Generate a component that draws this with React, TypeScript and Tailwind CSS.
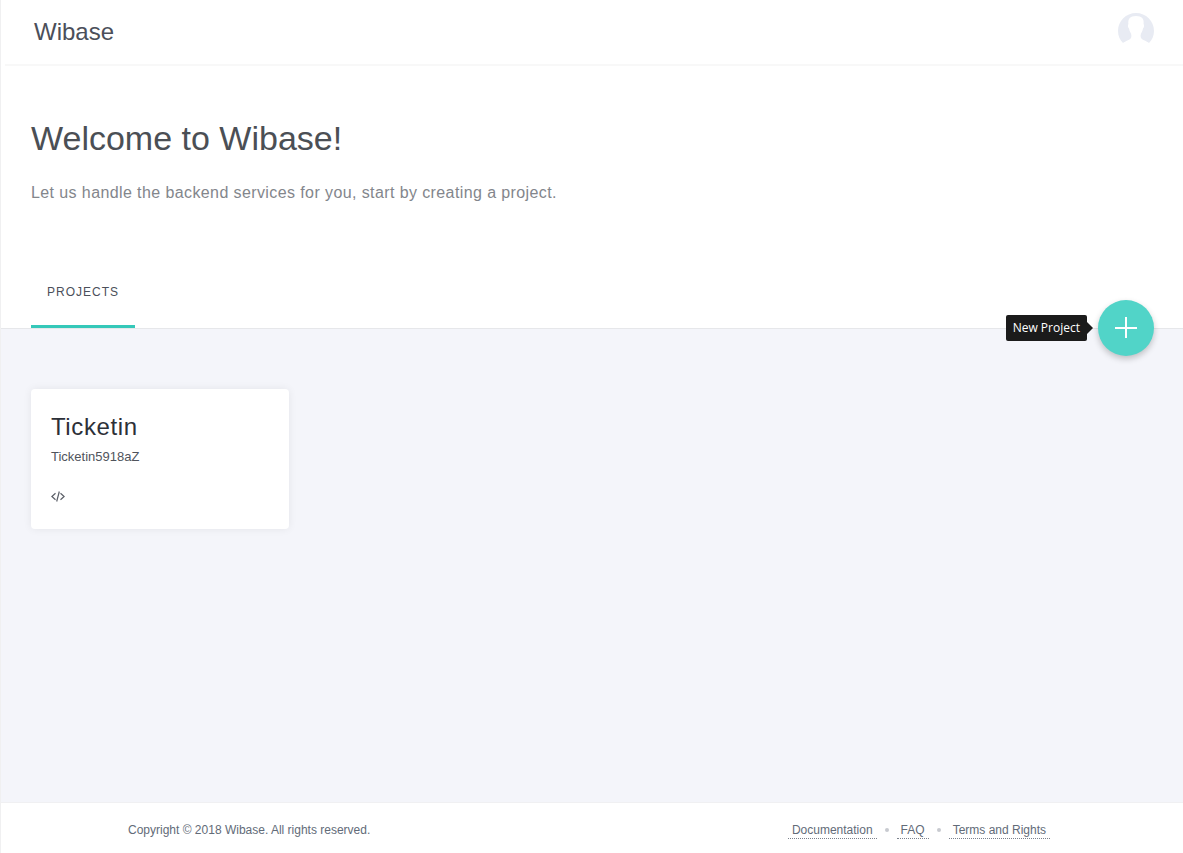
import React from "react";

const footerLinks = ["Documentation", "FAQ", "Terms and Rights"];

function Header() {
  return (
    <header className="pl-1">
      <div className="flex h-[66px] items-start justify-between border-b-2 border-[#f8f8f8] pl-[29px] pr-[29px] pt-3">
        <a href="#home" className="pt-1 text-2xl leading-8 text-[#4b4f5a]">
          Wibase
        </a>
        <button type="button" aria-label="Account" className="size-9">
          <svg viewBox="0 0 36 36" className="size-9" aria-hidden="true">
            <path
              fill="#e8ebf3"
              d="M5 31C1.900 28 0 23.700 0 19C0 9 8 1 18 1S36 9 36 19C36 23.700 34.100 28 31 31C28.500 28.800 24.500 28.500 23 26C22.300 24.500 22.500 22.500 23.300 21C24.300 19.500 24.700 18 25 16.500C26.200 15.500 26.400 13 25.600 12C26.200 6.800 24 4 18 4S9.800 6.800 10.400 12C9.600 13 9.800 15.500 11 16.500C11.300 18 11.700 19.500 12.700 21C13.500 22.500 13.700 24.500 13 26C11.500 28.500 7.500 28.800 5 31z"
            />
          </svg>
        </button>
      </div>
    </header>
  );
}

function NewProject() {
  return (
    <div className="absolute right-[29px] -bottom-7 flex items-center gap-[5px]">
      <div role="tooltip" className="flex items-center">
        <span className="rounded-xs bg-[#1b1b1b] px-[7px] py-1 font-['Open_Sans',sans-serif] text-xs leading-[18px] text-white">
          New Project
        </span>
        <svg viewBox="0 0 6 12" className="h-3 w-1.5" aria-hidden="true">
          <path d="M0 0l6 6-6 6z" fill="#1b1b1b" />
        </svg>
      </div>
      <button
        type="button"
        aria-label="New Project"
        className="flex size-14 items-center justify-center rounded-full bg-[#51d4c8] shadow-[0_3px_6px_rgba(0,0,0,0.22)]"
      >
        <svg viewBox="0 0 24 24" className="size-6" fill="none" stroke="#fff" strokeWidth="2" aria-hidden="true">
          <path d="M12 1v21M1 12h22" />
        </svg>
      </button>
    </div>
  );
}

function ProjectCard({ name, id }: { name: string; id: string }) {
  return (
    <article className="h-[140px] w-[258px] rounded-sm bg-white px-5 pt-5 shadow-[0_0_8px_rgba(0,0,0,0.07)]">
      <h2 className="text-2xl leading-9 tracking-wide text-[#2c3038]">{name}</h2>
      <p className="text-[13px] leading-6 text-[#50545c]">{id}</p>
      <svg
        viewBox="0 0 14 14"
        className="mt-5 size-3.5"
        fill="none"
        stroke="#5b5f68"
        strokeWidth="1.2"
        aria-hidden="true"
      >
        <path d="M4.500 4.200L.9 7.500L4.500 10.800M9.500 4.200L13.100 7.500L9.500 10.800M8.300 2.500L5.700 12.500" />
      </svg>
    </article>
  );
}

export default function App() {
  return (
    <div className="flex min-h-screen flex-col border-l border-[#f0f0f1] bg-white font-['Liberation_Sans',Arial,sans-serif]">
      <Header />
      <section className="relative border-b border-[#e6e7ea] px-[30px] pt-12">
        <h1 className="text-[34px] leading-[48px] text-[#4b4f55]">Welcome to Wibase!</h1>
        <p className="mt-[19px] text-base leading-6 tracking-wide text-[#83868c]">
          Let us handle the backend services for you, start by creating a project.
        </p>
        <nav className="mt-[62px] flex">
          <a
            href="#projects"
            className="border-b-3 border-[#35c8b9] px-4 pt-4 pb-6 text-xs leading-[18px] tracking-[1px] text-[#4b4f5a]"
          >
            PROJECTS
          </a>
        </nav>
        <NewProject />
      </section>
      <main className="grow bg-[#f4f5fa] px-[30px] py-[60px]">
        <ProjectCard name="Ticketin" id="Ticketin5918aZ" />
      </main>
      <footer className="flex flex-wrap items-center justify-between border-t border-[#f0f0f2] pt-[18px] pb-[14px] pl-[127px] pr-[133px] text-xs leading-[18px] text-[#626b78]">
        <p>Copyright © 2018 Wibase. All rights reserved.</p>
        <ul className="flex items-center gap-2">
          {footerLinks.map((label, index) => (
            <li key={label} className="flex items-center gap-2">
              {index > 0 && <span className="size-1 rounded-full bg-[#c8cad0]" />}
              <a href="#footer" className="border-b border-dotted border-[#7b818c] px-1 leading-4">
                {label}
              </a>
            </li>
          ))}
        </ul>
      </footer>
    </div>
  );
}
